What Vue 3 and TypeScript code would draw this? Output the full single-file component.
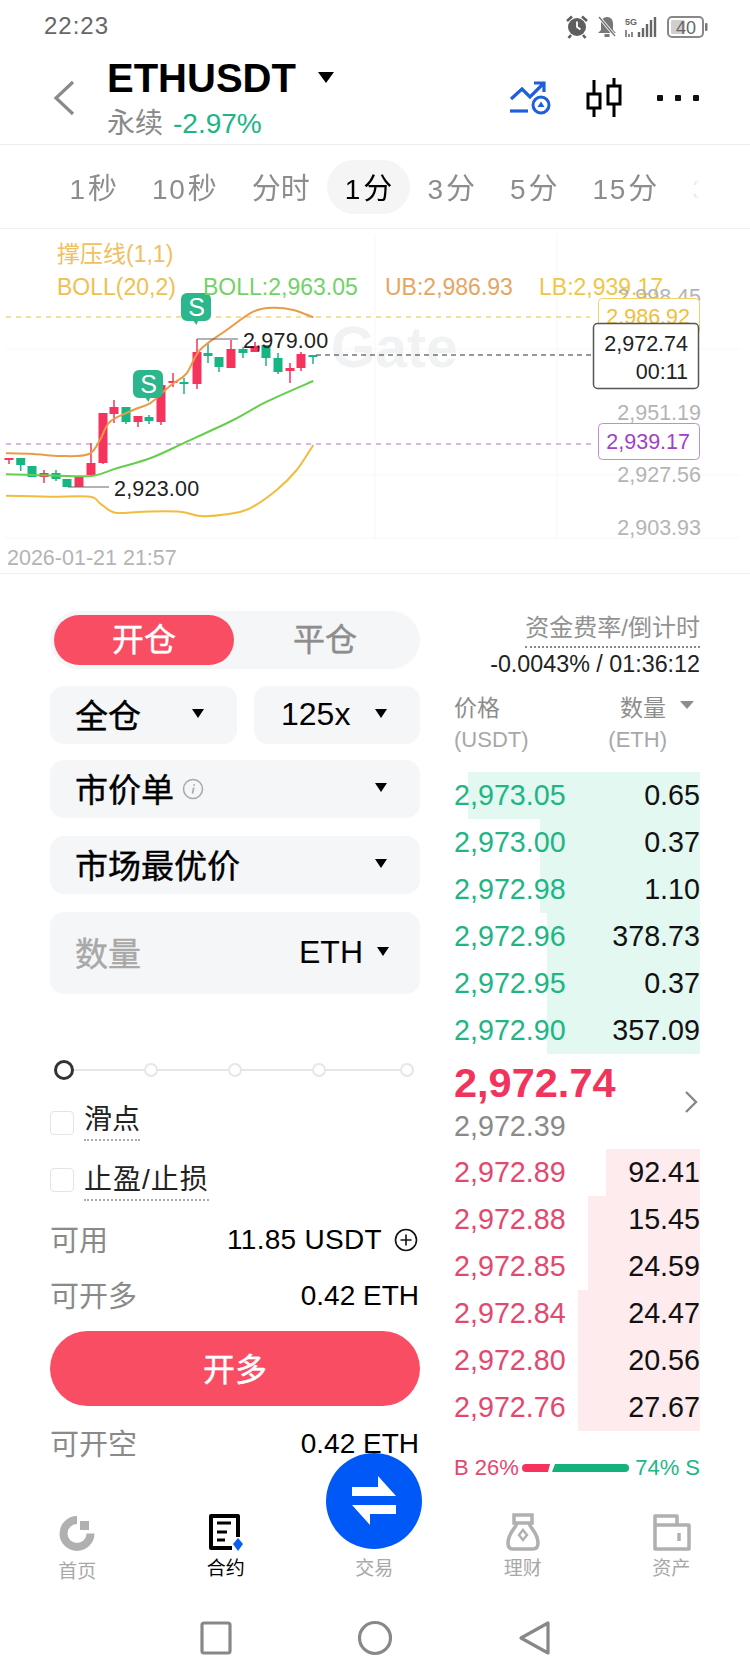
<script setup lang="ts">
interface Candle { x: number; wt: number; wb: number; bt: number; bb: number; up: boolean }
const raw: [number, number, number, number, number, number][] = [
  [9,458,464,458,460,1],[20.7,458,471,458,465,0],[32,466,477,466,477,0],[44,470,483,473,477,1],
  [56,470,481,473,479,0],[67,479,487,479,487,0],[79,477,487,477,487,1],[91,443,477,463,475,1],
  [103,413,464,413,463,1],[114,400,423,407,414,1],[126,407,424,407,422,0],[138,416,427,416,422,1],
  [149,415,424,417,421,0],[161,385,425,385,422,1],[173,373,387,381,383,1],[184,378,394,382,384,0],
  [197,339,389,352,384,1],[208,343,363,353,356,0],[219,357,372,357,367,0],[231,340,368,349,368,1],
  [243,347,358,349,353,0],[255,342,352,346,352,1],[266,345,366,345,358,0],[278,353,374,358,372,0],
  [290,363,383,368,371,1],[301,352,371,354,368,1],[313,355,364,355,357,0],
]
const candles: Candle[] = raw.map(([x, wt, wb, bt, bb, u]) => ({ x, wt, wb, bt, bb, up: u === 1 }))

// Catmull-Rom smoothing of points read from the reference (3x crop based at y=280)
const smooth = (src: number[][]): string => {
  const p = src.map(([x, y]) => [x / 3, 280 + y / 3])
  let d = `M${p[0][0].toFixed(1)} ${p[0][1].toFixed(1)}`
  for (let i = 0; i < p.length - 1; i++) {
    const a = p[Math.max(i - 1, 0)]
    const b = p[i]
    const c = p[i + 1]
    const e = p[Math.min(i + 2, p.length - 1)]
    const c1x = b[0] + (c[0] - a[0]) / 6
    const c1y = b[1] + (c[1] - a[1]) / 6
    const c2x = c[0] - (e[0] - b[0]) / 6
    const c2y = c[1] - (e[1] - b[1]) / 6
    d += `C${c1x.toFixed(1)} ${c1y.toFixed(1)} ${c2x.toFixed(1)} ${c2y.toFixed(1)} ${c[0].toFixed(1)} ${c[1].toFixed(1)}`
  }
  return d
}
const ub = smooth([[18,520],[100,522],[180,528],[265,523],[300,480],[330,425],[400,390],[450,370],[490,335],[520,310],[560,280],[600,210],[680,150],[760,95],[820,83],[880,90],[940,112]])
const mid = smooth([[18,583],[100,585],[200,588],[280,587],[350,565],[450,535],[550,490],[700,420],[800,365],[940,303]])
const lb = smooth([[18,647],[150,650],[270,650],[300,670],[345,698],[430,695],[540,695],[600,708],[680,703],[750,685],[830,630],[890,570],[940,495]])

const tabs = [
  { n: '1', u: '秒' }, { n: '10', u: '秒' }, { n: '', u: '分时' }, { n: '1', u: '分' },
  { n: '3', u: '分' }, { n: '5', u: '分' }, { n: '15', u: '分' }, { n: '30', u: '分' },
]
const greens = [
  { p: '2,973.05', q: '0.65', w: 232 }, { p: '2,973.00', q: '0.37', w: 160 }, { p: '2,972.98', q: '1.10', w: 160 },
  { p: '2,972.96', q: '378.73', w: 153 }, { p: '2,972.95', q: '0.37', w: 153 }, { p: '2,972.90', q: '357.09', w: 153 },
]
const reds = [
  { p: '2,972.89', q: '92.41', w: 94 }, { p: '2,972.88', q: '15.45', w: 112 }, { p: '2,972.85', q: '24.59', w: 112 },
  { p: '2,972.84', q: '24.47', w: 122 }, { p: '2,972.80', q: '20.56', w: 122 }, { p: '2,972.76', q: '27.67', w: 122 },
]
</script>

<template>
  <div class="page">
    <div class="status">
      <span class="time">22:23</span>
      <svg class="status-icons" width="144" height="24" viewBox="0 0 144 24">
        <circle cx="11" cy="12" r="9" fill="#5f5f5f" />
        <path d="M11 6.500v5.500l3.500 2.500" stroke="#fff" stroke-width="1.800" fill="none" />
        <path d="M1 6l5-4.500M21 6l-5-4.500M5 20l-2.500 3M17 20l2.500 3" stroke="#5f5f5f" stroke-width="2.600" />
        <path d="M41 2c4 0 6 3 6 7v6l3 3H32l3-3V9c0-4 2-7 6-7z" fill="#777" />
        <path d="M33 2l16 19" stroke="#fff" stroke-width="3" />
        <path d="M33 2l16 19" stroke="#777" stroke-width="1.400" />
        <rect x="38.500" y="19" width="5" height="3" fill="#777" />
        <text class="st5g" x="59" y="10">5G</text>
        <path d="M60 15v7M63 19v3M66 17v5" stroke="#666" stroke-width="1.500" />
        <path d="M73 17v5M77 13v9M81 9v13M85 5v17M89 2v20" stroke="#666" stroke-width="2.400" />
        <rect x="102" y="2" width="35" height="20" rx="4" fill="#fff" stroke="#888" stroke-width="2" />
        <rect x="105" y="5" width="14" height="14" rx="1.500" fill="#cfcfcf" />
        <text class="stbat" x="120" y="18.500" text-anchor="middle">40</text>
        <rect x="139" y="8" width="2.500" height="8" rx="1" fill="#777" />
      </svg>
    </div>

    <header class="head">
      <svg class="back" width="22" height="36" viewBox="0 0 22 36">
        <path d="M20 2L3 18l17 16" fill="none" stroke="#8a8a8a" stroke-width="3.200" />
      </svg>
      <div class="title">
        <div class="symbol-line">
          <span class="symbol">ETHUSDT</span>
          <span class="tri tri-title"></span>
        </div>
        <div class="sub"><span class="perp">永续</span><span class="chg">-2.97%</span></div>
      </div>
      <div class="head-icons">
        <svg width="42" height="34" viewBox="0 0 42 34">
          <path d="M2 18l11-10 8 8L34 3M25 2h10v9" fill="none" stroke="#1f5fdc" stroke-width="3.200" />
          <path d="M1 30h18" stroke="#1f5fdc" stroke-width="3.200" />
          <circle cx="32" cy="24" r="8" fill="#fff" stroke="#1f5fdc" stroke-width="3" />
          <path d="M32 20.500l3.500 5.500h-7z" fill="#1f5fdc" />
        </svg>
        <svg width="38" height="40" viewBox="0 0 38 40">
          <path d="M9 2v14M9 30v9M29 0v8M29 26v13" stroke="#000" stroke-width="3" />
          <rect x="3" y="16" width="12" height="14" fill="#fff" stroke="#000" stroke-width="3" />
          <rect x="23" y="8" width="12" height="18" fill="#fff" stroke="#000" stroke-width="3" />
        </svg>
        <div class="dots"><i></i><i></i><i></i></div>
      </div>
    </header>

    <nav class="tabs">
      <span v-for="t in tabs" :key="t.n + t.u" class="tab" :class="{ on: t.n === '1' && t.u === '分' }"><span v-if="t.n" class="num">{{ t.n }}</span>{{ t.u }}</span>
    </nav>

    <section class="chart">
      <svg width="750" height="344" viewBox="0 229 750 344">
        <g stroke="#f7f7f7" stroke-width="1">
          <path d="M5 349H740M5 475H740M375 235V540M557 235V540M5 538H740" />
        </g>
        <text class="wm" x="331" y="367">Gate</text>

        <path d="M6 317H590" stroke="#f2d676" stroke-width="1.500" stroke-dasharray="5 5" />
        <path d="M6 444H596" stroke="#cf9fe0" stroke-width="1.500" stroke-dasharray="5 5" />
        <path d="M316 355H594" stroke="#333" stroke-width="1.200" stroke-dasharray="5 4" />

        <g v-for="c in candles" :key="c.x" :fill="c.up ? '#f5335c' : '#17b584'" :stroke="c.up ? '#f5335c' : '#17b584'">
          <line :x1="c.x" :x2="c.x" :y1="c.wt" :y2="c.wb" stroke-width="1.500" />
          <rect :x="c.x - 4.500" :y="c.bt" width="9" :height="c.bb - c.bt" stroke="none" />
        </g>

        <path :d="lb" fill="none" stroke="#f0bd3e" stroke-width="2" />
        <path :d="mid" fill="none" stroke="#64cf4c" stroke-width="2" />
        <path :d="ub" fill="none" stroke="#eb9b47" stroke-width="2" />

        <path d="M197 339H238M68 487H109" stroke="#666" stroke-width="1.200" />
        <text class="mark" x="243" y="348">2,979.00</text>
        <text class="mark" x="114" y="496">2,923.00</text>

        <g>
          <path d="M188 293h17a6 6 0 0 1 6 6v16a6 6 0 0 1-6 6h-7l-1.500 4-3-4h-6.500a6 6 0 0 1-6-6v-16a6 6 0 0 1 6-6z" fill="#2cb68b" />
          <text class="s" x="196.500" y="316" text-anchor="middle">S</text>
          <path d="M140 370h17a6 6 0 0 1 6 6v16a6 6 0 0 1-6 6h-7l-1.500 4-3-4h-6.500a6 6 0 0 1-6-6v-16a6 6 0 0 1 6-6z" fill="#2cb68b" />
          <text class="s" x="148.500" y="393" text-anchor="middle">S</text>
        </g>

        <text class="lg" x="57" y="262" fill="#efbf62">撑压线(1,1)</text>
        <text class="lg" x="57" y="295" fill="#f0c050">BOLL(20,2)</text>
        <text class="lg" x="203" y="295" fill="#72d268">BOLL:2,963.05</text>
        <text class="lg" x="385" y="295" fill="#e7a55f">UB:2,986.93</text>
        <text class="lg" x="539" y="295" fill="#f0c648">LB:2,939.17</text>

        <text class="ax" x="701" y="304" text-anchor="end">2,998.45</text>
        <text class="ax" x="701" y="420" text-anchor="end">2,951.19</text>
        <text class="ax" x="701" y="482" text-anchor="end">2,927.56</text>
        <text class="ax" x="701" y="535" text-anchor="end">2,903.93</text>
        <text class="ax" x="7" y="564.500">2026-01-21 21:57</text>

        <rect x="598.500" y="298.500" width="101" height="36" rx="4" fill="#fff" stroke="#f2d264" />
        <text class="bx" x="690" y="324" text-anchor="end" fill="#efbe3c">2,986.92</text>
        <rect x="598.500" y="423.500" width="101" height="36" rx="4" fill="#fff" stroke="#c58ae0" />
        <text class="bx" x="690" y="449" text-anchor="end" fill="#a23fc8">2,939.17</text>
        <rect x="593.500" y="323.500" width="105" height="65" rx="4" fill="#fff" stroke="#555" stroke-width="1.500" />
        <text class="bx" x="688" y="351" text-anchor="end" fill="#222">2,972.74</text>
        <text class="bx" x="688" y="379" text-anchor="end" fill="#222">00:11</text>
      </svg>
    </section>

    <main class="trade">
      <div class="left">
        <div class="toggle">
          <span class="tg on">开仓</span>
          <span class="tg">平仓</span>
        </div>
        <div class="row2">
          <div class="field mode"><span>全仓</span><i class="tri"></i></div>
          <div class="field lev"><span class="en">125x</span><i class="tri"></i></div>
        </div>
        <div class="field single t1">
          <span class="with-info">市价单
            <svg width="22" height="22" viewBox="0 0 22 22">
              <circle cx="11" cy="11" r="9.500" fill="none" stroke="#a8a8a8" stroke-width="1.500" />
              <path d="M11.800 9.500l-1.300 6M12.200 6.200v1.500" stroke="#a8a8a8" stroke-width="1.600" />
            </svg>
          </span>
          <i class="tri"></i>
        </div>
        <div class="field single t2"><span>市场最优价</span><i class="tri"></i></div>
        <div class="field qty">
          <span class="ph">数量</span>
          <span class="unit"><span class="en">ETH</span><i class="tri"></i></span>
        </div>

        <div class="slider">
          <i class="knob"></i>
          <i class="dot" style="left: 90px"></i>
          <i class="dot" style="left: 174px"></i>
          <i class="dot" style="left: 258px"></i>
          <i class="dot" style="left: 346px"></i>
        </div>

        <div class="check first"><i class="box"></i><span class="dl">滑点</span></div>
        <div class="check"><i class="box b2"></i><span class="dl wide">止盈/止损</span></div>

        <div class="info i1">
          <span class="k">可用</span>
          <span class="v avail">11.85 USDT
            <svg class="plus" width="24" height="24" viewBox="0 0 24 24">
              <circle cx="12" cy="12" r="10.500" fill="none" stroke="#111" stroke-width="1.600" />
              <path d="M6.500 12h11M12 6.500v11" stroke="#111" stroke-width="1.600" />
            </svg>
          </span>
        </div>
        <div class="info i2"><span class="k">可开多</span><span class="v">0.42 ETH</span></div>
        <button class="cta" type="button">开多</button>
        <div class="info i3"><span class="k">可开空</span><span class="v">0.42 ETH</span></div>
        <div class="cta-green"></div>
      </div>

      <aside class="right">
        <div class="fund-t"><span>资金费率/倒计时</span></div>
        <div class="fund-v">-0.0043% / 01:36:12</div>
        <div class="book-head">
          <span class="h1">价格</span>
          <span class="h1 q">数量<i class="tri-g"></i></span>
        </div>
        <div class="book-head sm">
          <span>(USDT)</span>
          <span class="q2">(ETH)</span>
        </div>

        <div class="rows green">
          <div v-for="r in greens" :key="r.p" class="bk">
            <i class="bar" :style="{ width: r.w + 'px' }"></i>
            <span class="p">{{ r.p }}</span><span class="n">{{ r.q }}</span>
          </div>
        </div>

        <div class="midp">
          <div class="mid-l">
            <div class="last">2,972.74</div>
            <div class="mark-p">2,972.39</div>
          </div>
          <svg width="14" height="24" viewBox="0 0 14 24">
            <path d="M2 2l10 10L2 22" fill="none" stroke="#888" stroke-width="2.400" />
          </svg>
        </div>

        <div class="rows red">
          <div v-for="r in reds" :key="r.p" class="bk">
            <i class="bar" :style="{ width: r.w + 'px' }"></i>
            <span class="p">{{ r.p }}</span><span class="n">{{ r.q }}</span>
          </div>
        </div>

        <div class="ratio">
          <span class="rb">B 26%</span>
          <svg width="110" height="10" viewBox="0 0 110 10">
            <path d="M4 1h24l-2 8H4a4 4 0 0 1 0-8z" fill="#f5335c" />
            <path d="M33 1h70a4 4 0 0 1 0 8H30z" fill="#12b27a" />
          </svg>
          <span class="rs">74% S</span>
        </div>
      </aside>
    </main>

    <footer class="tabbar">
      <div class="nav-item">
        <svg width="44" height="40" viewBox="0 0 44 40">
          <path d="M22 7A13.500 13.500 0 1 0 35.500 20.500" fill="none" stroke="#b0b0b0" stroke-width="8" />
          <rect x="25" y="8" width="9" height="9" fill="#b0b0b0" />
        </svg>
        <span class="lab low">首页</span>
      </div>
      <div class="nav-item active">
        <svg width="44" height="40" viewBox="0 0 44 40">
          <path d="M34 24V3H7v32h21" fill="none" stroke="#000" stroke-width="4" stroke-linejoin="round" />
          <path d="M13 10h14M13 19h10M13 27h8" stroke="#000" stroke-width="3" />
          <path d="M34 25l5 6-5 7-5-7z" fill="#0a5ef0" />
        </svg>
        <span class="lab">合约</span>
      </div>
      <div class="nav-item"><span class="spacer"></span><span class="lab">交易</span></div>
      <div class="nav-item">
        <svg width="44" height="40" viewBox="0 0 44 40">
          <path d="M13 2h18v8H13zM16 10c-1 5-9 10-9 20 0 4 2 6 5 6h20c3 0 5-2 5-6 0-10-8-15-9-20" fill="none" stroke="#b0b0b0" stroke-width="3.500" />
          <path d="M22 17l4 5-4 5-4-5z" fill="none" stroke="#b0b0b0" stroke-width="2.400" />
        </svg>
        <span class="lab">理财</span>
      </div>
      <div class="nav-item">
        <svg width="44" height="40" viewBox="0 0 44 40">
          <path d="M6 36V3h22v9h12v24zM6 12h22" fill="none" stroke="#b0b0b0" stroke-width="3.500" stroke-linejoin="round" />
          <path d="M30 20v8" stroke="#b0b0b0" stroke-width="3.500" />
        </svg>
        <span class="lab">资产</span>
      </div>
    </footer>

    <button class="fab" type="button" aria-label="交易">
      <svg width="46" height="50" viewBox="0 0 46 50">
        <path d="M1 11h26V0l18 20H1zM45 29v9H19v11L1 29z" fill="#fff" />
      </svg>
    </button>

    <div class="sysnav">
      <svg width="360" height="36" viewBox="0 0 360 36">
        <rect x="2" y="3" width="28" height="30" rx="2" fill="none" stroke="#888" stroke-width="3.200" />
        <circle cx="175" cy="18" r="15.500" fill="none" stroke="#888" stroke-width="3.200" />
        <path d="M348 3v30L321 18z" fill="none" stroke="#888" stroke-width="3.200" stroke-linejoin="round" />
      </svg>
    </div>
  </div>
</template>

<style scoped>
.page {
  position: relative;
  width: 750px;
  height: 1680px;
  overflow: hidden;
  background: #fff;
  color: #111;
  font-family: "Liberation Sans", "Noto Sans CJK SC", sans-serif;
}
i { display: block; font-style: normal; }

.status {
  height: 50px;
  display: flex;
  align-items: center;
  justify-content: space-between;
  padding: 2px 44px 0;
  box-sizing: border-box;
}
.time { font-size: 24px; color: #666; letter-spacing: 1px; }
.status-icons { margin-right: -4px; margin-top: 1px; }
.st5g { font-size: 9px; font-weight: 700; fill: #666; }
.stbat { font-size: 18px; fill: #666; }

.head {
  height: 95px;
  box-sizing: border-box;
  border-bottom: 1px solid #ececec;
  display: flex;
  padding-left: 53px;
  position: relative;
}
.back { margin-top: 30px; flex: none; }
.title { margin-left: 32px; }
.symbol-line { display: flex; align-items: center; height: 46px; margin-top: 5px; }
.symbol { font-size: 40px; font-weight: 700; color: #000; }
.tri {
  display: block;
  width: 0;
  height: 0;
  border-left: 6.500px solid transparent;
  border-right: 6.500px solid transparent;
  border-top: 9px solid #000;
}
.tri-title {
  margin-left: 22px;
  margin-top: -2px;
  border-left-width: 8.500px;
  border-right-width: 8.500px;
  border-top-width: 11px;
}
.sub { display: flex; gap: 10px; font-size: 28px; line-height: 34px; margin-top: 6px; }
.perp { color: #8a8a8a; }
.chg { color: #20b585; }
.head-icons {
  position: absolute;
  right: 51px;
  top: 28px;
  display: flex;
  align-items: center;
  gap: 34px;
}
.dots { display: flex; gap: 12px; }
.dots i { width: 6px; height: 6px; border-radius: 1px; background: #111; }

.tabs {
  height: 83px;
  width: 700px;
  overflow: hidden;
  display: flex;
  align-items: center;
  box-sizing: border-box;
  padding-left: 52px;
  -webkit-mask-image: linear-gradient(to right, #000 96%, transparent);
  mask-image: linear-gradient(to right, #000 96%, transparent);
}
.tab {
  flex: none;
  height: 54px;
  line-height: 58px;
  padding: 0 17.500px;
  font-size: 29px;
  color: #8d8d8d;
  border-radius: 27px;
  white-space: nowrap;
}
.num { font-size: 28px; letter-spacing: 1.500px; margin-right: 1.500px; }
.tab.on { background: #f5f5f5; color: #000; }

.chart { height: 344px; border-top: 1px solid #f1f1f1; border-bottom: 1px solid #f1f1f1; }
.chart svg { display: block; }
.wm { font-size: 57px; font-weight: 700; fill: #f1f2f3; }
.mark { font-size: 21.500px; fill: #222; letter-spacing: .2px; }
.s { font-size: 25px; fill: #fff; }
.lg { font-size: 23px; }
.ax { font-size: 21.500px; fill: #b4b4b4; }
.bx { font-size: 21.500px; }

.trade {
  height: 906px;
  overflow: hidden;
  display: flex;
  align-items: flex-start;
  padding-left: 50px;
}
.left { width: 370px; }
.toggle {
  margin-top: 37px;
  height: 58px;
  border-radius: 29px;
  background: #f5f6f7;
  display: flex;
  padding: 4px;
  box-sizing: border-box;
}
.tg {
  width: 180px;
  text-align: center;
  line-height: 50px;
  font-size: 32px;
  color: #8d8d8d;
  font-weight: 400;
  -webkit-text-stroke: .4px currentColor;
  border-radius: 25px;
}
.toggle .tg:last-child { flex: 1; }
.tg.on { background: #f94d63; color: #fff; }
.row2 { display: flex; gap: 17px; margin-top: 17px; }
.field {
  background: #f5f6f7;
  border-radius: 14px;
  display: flex;
  align-items: center;
  justify-content: space-between;
  font-size: 33px;
  font-weight: 400;
  -webkit-text-stroke: .4px currentColor;
  color: #000;
  box-sizing: border-box;
  padding-bottom: 3px;
}
.en { font-size: 32px; -webkit-text-stroke: 0; position: relative; top: 1px; }
.mode { width: 187px; height: 58px; padding-left: 25px; padding-right: 33px; }
.lev { width: 166px; height: 58px; padding-left: 27px; padding-right: 33px; }
.single { height: 58px; padding-left: 25px; padding-right: 33px; }
.t1 { margin-top: 16px; }
.t2 { margin-top: 18px; }
.with-info { display: flex; align-items: center; gap: 8px; }
.with-info svg { position: relative; top: 1px; }
.qty { height: 82px; margin-top: 18px; padding-left: 25px; padding-right: 31px; }
.ph { color: #a8a8a8; }
.unit { display: flex; align-items: center; gap: 14px; }
.slider {
  position: relative;
  height: 20px;
  margin: 66px 6px 0 4px;
}
.slider::before {
  content: "";
  position: absolute;
  left: 0;
  right: 0;
  top: 9px;
  height: 2px;
  background: #e6e6e6;
}
.knob {
  position: absolute;
  left: 0;
  top: 0;
  width: 20px;
  height: 20px;
  box-sizing: border-box;
  border: 3.500px solid #333;
  border-radius: 50%;
  background: #fff;
}
.dot {
  position: absolute;
  top: 3px;
  width: 14px;
  height: 14px;
  box-sizing: border-box;
  border: 2px solid #e6e6e6;
  border-radius: 50%;
  background: #fff;
}
.check { display: flex; height: 60px; font-size: 28px; }
.check.first { margin-top: 21px; }
.box {
  width: 24px;
  height: 24px;
  box-sizing: border-box;
  border: 1.500px solid #e4e4e4;
  border-radius: 4px;
  margin: 10px 10px 0 0;
}
.box.b2 { margin-top: 7px; }
.dl {
  height: 38px;
  line-height: 38px;
  border-bottom: 2px dotted #aaa;
  color: #222;
}
.dl.wide { letter-spacing: 1px; }
.info {
  height: 40px;
  display: flex;
  align-items: center;
  justify-content: space-between;
  font-size: 28px;
}
.i1 { margin-top: -1px; }
.i2 { margin-top: 16px; }
.i3 { margin-top: 18px; }
.k { color: #8a8a8a; font-size: 29px; margin-bottom: 5px; }
.v { color: #000; display: flex; align-items: center; margin-right: 1px; }
.avail { letter-spacing: .3px; }
.plus { margin-left: 12px; margin-right: 1px; }
.cta {
  display: block;
  width: 100%;
  height: 75px;
  margin-top: 15px;
  padding: 0 0 4px;
  border: 0;
  border-radius: 38px;
  background: #f94d63;
  color: #fff;
  font-family: inherit;
  font-size: 32px;
  font-weight: 400;
  -webkit-text-stroke: .4px currentColor;
}
.cta-green {
  margin-top: 18px;
  height: 75px;
  border-radius: 38px;
  background: #8adbc6;
}

.right { width: 246px; margin-left: 34px; }
.fund-t {
  margin-top: 36px;
  text-align: right;
  font-size: 24px;
  line-height: 36px;
  color: #929292;
}
.fund-t span {
  display: inline-block;
  height: 36px;
  border-bottom: 2px dotted #888;
}
.fund-v { margin-top: 1px; text-align: right; font-size: 23.300px; line-height: 30px; color: #222; }
.book-head { display: flex; justify-content: space-between; margin-top: 13px; }
.h1 { font-size: 23px; line-height: 32px; color: #8d8d8d; }
.h1.q { display: flex; align-items: center; padding-right: 6px; }
.tri-g {
  margin-left: 14px;
  margin-top: -7px;
  width: 0;
  height: 0;
  border-left: 7px solid transparent;
  border-right: 7px solid transparent;
  border-top: 8px solid #8d8d8d;
}
.book-head.sm { margin-top: 2px; font-size: 22px; line-height: 28px; color: #a8a8a8; height: 28px; }
.q2 { padding-right: 33px; }
.rows { margin-top: 18px; }
.bk {
  position: relative;
  height: 47px;
  display: flex;
  justify-content: space-between;
  align-items: center;
  font-size: 28.700px;
}
.bk .bar { position: absolute; right: 0; top: 0; bottom: 0; }
.bk span { position: relative; }
.bk .n { color: #111; }
.green .bar { background: #e2f8f0; }
.green .p { color: #1fb586; }
.red { margin-top: 0; }
.red .bar { background: #fdebee; }
.red .p { color: #e3496f; }
.midp {
  height: 95px;
  display: flex;
  justify-content: space-between;
  align-items: flex-start;
}
.midp svg { margin-top: 36px; margin-right: 2px; }
.last { font-size: 41.500px; font-weight: 700; color: #f2335c; line-height: 48px; margin-top: 5px; }
.mark-p { font-size: 28.700px; line-height: 34px; color: #8a8a8a; margin-top: 2px; }
.ratio {
  margin-top: 22px;
  height: 30px;
  display: flex;
  align-items: center;
  justify-content: space-between;
  font-size: 22px;
}
.rb { color: #e3496f; }
.rs { color: #1fb586; }
.ratio svg { margin: 0 2px; }

.tabbar {
  position: relative;
  height: 120px;
  background: #fff;
  display: grid;
  grid-template-columns: repeat(5, 148.500px);
  padding-left: 3px;
  box-sizing: border-box;
}
.nav-item {
  display: flex;
  flex-direction: column;
  align-items: center;
  padding-top: 33px;
}
.spacer { height: 40px; }
.lab { margin-top: 1px; font-size: 19px; line-height: 30px; color: #a8a8a8; }
.lab.low { margin-top: 4px; }
.active .lab { color: #000; }
.fab {
  position: absolute;
  left: 326px;
  top: 1453px;
  width: 96px;
  height: 96px;
  border: 0;
  padding: 0;
  border-radius: 50%;
  background: #0059f7;
  display: flex;
  align-items: center;
  justify-content: center;
}
.sysnav {
  height: 80px;
  display: flex;
  justify-content: center;
  padding: 20px 0 0 0;
  box-sizing: border-box;
}
.sysnav svg { margin-left: 10px; }
</style>

<style>
html, body { margin: 0; background: #fff; }
</style>
